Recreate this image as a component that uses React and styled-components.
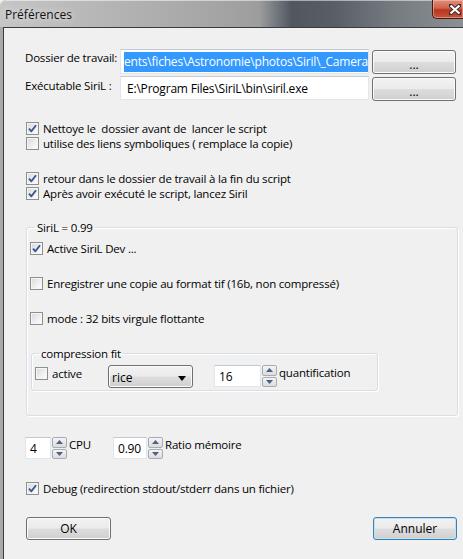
import React from 'react';
import styled, { createGlobalStyle } from 'styled-components';

const GlobalStyle = createGlobalStyle`
	html, body {
		margin: 0;
		padding: 0;
		background: #f0f0f0;
	}
	body {
		font-family: 'Open Sans', 'Noto Sans', sans-serif;
		font-size: 11.5px;
		letter-spacing: -0.2px;
		color: #000;
	}
`;

const Window = styled.div`
	width: 463px;
	height: 559px;
	overflow: hidden;
	display: flex;
	flex-direction: column;
	background: #a9a9a9;
	border-radius: 6px 0 0 0;
`;

const TitleBar = styled.div`
	height: 27px;
	flex-shrink: 0;
	display: flex;
	align-items: flex-start;
	justify-content: space-between;
	background: linear-gradient(
		90deg,
		#c6c6c6 0%,
		#b7b7b7 20%,
		#a6a6a6 45%,
		#9d9d9d 56%,
		#7a7f84 59%,
		#50575f 63%,
		#575e66 72%,
		#767b81 85%,
		#8b9095 100%
	);
	box-shadow: inset 0 1px 0 rgba(255, 255, 255, 0.5);
	border-radius: 6px 0 0 0;
`;

const Title = styled.span`
	margin: 7px 0 0 5px;
	font-size: 12px;
	line-height: 16px;
	letter-spacing: 0;
	color: #111;
	text-shadow: 0 0 6px rgba(255, 255, 255, 0.9);
`;

const CloseButton = styled.div`
	width: 31px;
	height: 19px;
	box-sizing: border-box;
	display: flex;
	align-items: center;
	justify-content: flex-end;
	padding-right: 2px;
	border: 1px solid #4a1a12;
	border-top: none;
	border-right: none;
	border-radius: 0 0 0 5px;
	background: linear-gradient(#e0907e 0%, #d0614a 45%, #b8361e 55%, #c6543a 100%);
	box-shadow: inset 0 0 0 1px rgba(255, 210, 200, 0.45);
`;

const Frame = styled.div`
	flex: 1;
	display: flex;
	padding-left: 3px;
`;

const Client = styled.div`
	flex: 1;
	background: #f0f0f0;
	border-top: 1px solid #3b3b3b;
	border-left: 1px solid #3b3b3b;
	padding: 21px 0 0 21px;
	display: flex;
	flex-direction: column;
`;

const PathRow = styled.div`
	display: flex;
	align-items: flex-start;
	margin-top: ${(p) => p.top || 0}px;
`;

const PathLabel = styled.div`
	width: 95px;
	line-height: 15px;
	padding-top: ${(p) => p.pad}px;
	white-space: nowrap;
`;

const TextBox = styled.div`
	width: ${(p) => p.w}px;
	height: ${(p) => p.h}px;
	box-sizing: border-box;
	background: #fff;
	border: 1px solid #e2e6ec;
	border-top-color: #c3cad3;
	display: flex;
	align-items: center;
	padding-left: ${(p) => p.pad ?? 3}px;
	white-space: nowrap;
	overflow: hidden;
	font-size: 12px;
`;

const Selected = styled.span`
	background: #3399ff;
	color: #fff;
	line-height: 20px;
	padding-right: 2px;
`;

const Button = styled.button`
	font-family: inherit;
	font-size: 12px;
	letter-spacing: 0;
	width: ${(p) => p.w}px;
	height: ${(p) => p.h || 23}px;
	margin: ${(p) => p.m || 0};
	padding: 0;
	color: #000;
	box-sizing: border-box;
	border: 1px solid ${(p) => (p.focused ? '#3c7fb1' : '#707070')};
	border-radius: 3px;
	background: linear-gradient(#f2f2f2 0%, #ebebeb 48%, #dddddd 52%, #cfcfcf 100%);
	box-shadow: inset 0 0 0 1px ${(p) => (p.focused ? '#bfe3f6' : '#fbfbfb')};
	line-height: 1;
`;

const Dots = styled.span`
	position: relative;
	top: 3px;
`;

const CheckRow = styled.label`
	display: flex;
	align-items: center;
	gap: 4px;
	height: 15px;
	line-height: 15px;
	white-space: nowrap;
	flex-shrink: 0;
	width: ${(p) => (p.w ? `${p.w}px` : 'auto')};
	margin-top: ${(p) => p.top || 0}px;
	margin-left: ${(p) => p.left || 0}px;
`;

const Box = styled.span`
	width: 13px;
	height: 13px;
	box-sizing: border-box;
	flex-shrink: 0;
	border: 1px solid #8e8f8f;
	background: linear-gradient(135deg, #d8d8d8 0%, #f1f1f1 60%, #fdfdfd 100%);
	box-shadow: inset 0 0 0 1px #f6f6f6;
	display: flex;
	align-items: center;
	justify-content: center;
`;

const Group = styled.fieldset`
	margin: ${(p) => p.m};
	padding: ${(p) => p.pad};
	width: ${(p) => p.w}px;
	box-sizing: border-box;
	border: 1px solid #d5dfe5;
	border-radius: 3px;
	box-shadow: 1px 1px 0 #fff inset, 1px 1px 0 #fff;
	min-width: 0;
`;

const Legend = styled.legend`
	padding: 0 2px;
	margin-left: ${(p) => p.left}px;
	line-height: 15px;
`;

const CompRow = styled.div`
	display: flex;
	align-items: flex-start;
	margin-top: 4px;
`;

const ComboBox = styled(Button)`
	display: flex;
	align-items: center;
	justify-content: space-between;
	padding: 3px 6px 0 3px;
	text-align: left;
`;

const Spin = styled.div`
	display: flex;
	align-items: flex-start;
	flex-shrink: 0;
	width: ${(p) => (p.total ? `${p.total}px` : 'auto')};
	margin-left: ${(p) => p.left || 0}px;
`;

const SpinButtons = styled.div`
	width: 15px;
	height: ${(p) => p.h}px;
	margin-left: 1px;
	display: flex;
	flex-direction: column;
	gap: 1px;
`;

const SpinHalf = styled.div`
	flex: 1;
	box-sizing: border-box;
	border: 1px solid #a8acb2;
	border-radius: 2px;
	background: linear-gradient(#f4f4f4, #dcdcdc);
	display: flex;
	align-items: center;
	justify-content: center;
`;

const SpinLabel = styled.span`
	line-height: 15px;
	margin-left: 2px;
	white-space: nowrap;
`;

const ResourceRow = styled.div`
	display: flex;
	align-items: flex-start;
	margin-top: 21px;
`;

const Footer = styled.div`
	display: flex;
	justify-content: space-between;
	width: 431px;
	margin: 21px 0 0 1px;
`;

const Check = () => (
	<svg width="9" height="9" viewBox="0 0 9 9">
		<path
			d="M1 4.6 L3.4 7.3 L8 1.2"
			fill="none"
			stroke="#3d5596"
			strokeWidth="1.9"
			strokeLinejoin="round"
		/>
	</svg>
);

const CheckBox = ({ checked, children, top, left, w }) => (
	<CheckRow top={top} left={left} w={w}>
		<Box>{checked && <Check />}</Box>
		<span>{children}</span>
	</CheckRow>
);

const Arrow = ({ up }) => (
	<svg width="7" height="4" viewBox="0 0 7 4">
		<path d={up ? 'M0 4 L3.5 0 L7 4 Z' : 'M0 0 L7 0 L3.5 4 Z'} fill="#4d6185" />
	</svg>
);

const SpinBox = ({ value, w, h, label, left, total }) => (
	<Spin left={left} total={total}>
		<TextBox w={w} h={h} pad={4}>
			{value}
		</TextBox>
		<SpinButtons h={h}>
			<SpinHalf>
				<Arrow up />
			</SpinHalf>
			<SpinHalf>
				<Arrow />
			</SpinHalf>
		</SpinButtons>
		<SpinLabel>{label}</SpinLabel>
	</Spin>
);

const App = () => {
	return (
		<>
			<GlobalStyle />
			<Window>
				<TitleBar>
					<Title>Préférences</Title>
					<CloseButton>
						<svg width="12" height="11" viewBox="0 0 12 11">
							<path
								d="M1 1 L11 10 M11 1 L1 10"
								stroke="#3a2a28"
								strokeWidth="4"
								strokeLinecap="square"
							/>
							<path
								d="M1.5 1.5 L10.5 9.5 M10.5 1.5 L1.5 9.5"
								stroke="#fff"
								strokeWidth="2.2"
							/>
						</svg>
					</CloseButton>
				</TitleBar>
				<Frame>
					<Client>
						<PathRow>
							<PathLabel pad={1}>Dossier de travail:</PathLabel>
							<TextBox w={249} h={25}>
								<Selected>ents\fiches\Astronomie\photos\Siril\_Camera</Selected>
							</TextBox>
							<Button w={84} h={24} m="1px 0 0 3px">
								<Dots>...</Dots>
							</Button>
						</PathRow>
						<PathRow top={2}>
							<PathLabel pad={2}>Exécutable SiriL :</PathLabel>
							<TextBox w={249} h={24} pad={6}>
								E:\Program Files\SiriL\bin\siril.exe
							</TextBox>
							<Button w={84} h={24} m="1px 0 0 3px">
								<Dots>...</Dots>
							</Button>
						</PathRow>

						<CheckBox checked top={20} left={1}>
							Nettoye le&nbsp; dossier avant de&nbsp; lancer le script
						</CheckBox>
						<CheckBox left={1}>utilise des liens symboliques ( remplace la copie)</CheckBox>
						<CheckBox checked top={20} left={1}>
							retour dans le dossier de travail à la fin du script
						</CheckBox>
						<CheckBox checked left={1}>
							Après avoir exécuté le script, lancez Siril
						</CheckBox>

						<Group m="19px 0 0 1px" pad="0 0 24px 3px" w={432}>
							<Legend left={5}>SiriL = 0.99</Legend>
							<CheckBox checked top={6}>
								Active SiriL Dev ...
							</CheckBox>
							<CheckBox top={20}>
								Enregistrer une copie au format tif (16b, non compressé)
							</CheckBox>
							<CheckBox top={20}>mode : 32 bits virgule flottante</CheckBox>
							<Group m="20px 0 0 1px" pad="0 0 2px 3px" w={347}>
								<Legend left={4}>compression fit</Legend>
								<CompRow>
									<CheckBox w={73} top={1}>
										active
									</CheckBox>
									<ComboBox as="div" w={85}>
										<span>rice</span>
										<svg width="8" height="5" viewBox="0 0 8 5">
											<path d="M0 0 L8 0 L4 5 Z" fill="#000" />
										</svg>
									</ComboBox>
									<SpinBox value="16" w={47} h={22} label="quantification" left={21} />
								</CompRow>
							</Group>
						</Group>

						<ResourceRow>
							<SpinBox value="4" w={26} h={22} label="CPU" total={88} />
							<SpinBox value="0.90" w={34} h={22} label="Ratio mémoire" />
						</ResourceRow>

						<CheckBox checked top={22} left={1}>
							Debug (redirection stdout/stderr dans un fichier)
						</CheckBox>

						<Footer>
							<Button w={85}>OK</Button>
							<Button w={84} focused>
								Annuler
							</Button>
						</Footer>
					</Client>
				</Frame>
			</Window>
		</>
	);
};

export default App;
